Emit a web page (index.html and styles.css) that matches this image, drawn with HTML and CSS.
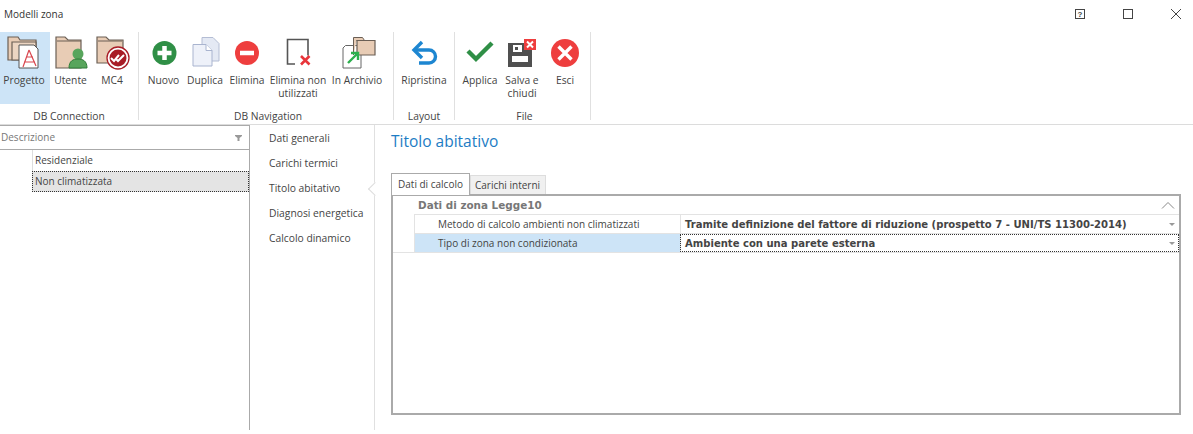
FILE: index.html
```html
<!DOCTYPE html>
<html lang="it">
<head>
<meta charset="utf-8">
<title>Modelli zona</title>
<link rel="stylesheet" href="styles.css">
</head>
<body>
<div class="window">
  <header class="titlebar">
    <span class="title">Modelli zona</span>
    <div class="winbtns">
      <svg class="winbtn" width="48" height="10" viewBox="0 0 48 10"><rect x="19.500" y=".5" width="9" height="9" fill="none" stroke="#444"/><text x="24" y="8" font-size="8" font-weight="700" text-anchor="middle" fill="#444" font-family="Liberation Sans">?</text></svg>
      <svg class="winbtn" width="48" height="10" viewBox="0 0 48 10"><rect x="19.500" y=".5" width="9" height="9" fill="none" stroke="#444"/></svg>
      <svg class="winbtn" width="48" height="10" viewBox="0 0 48 10"><path d="M19 0L29 10M29 0L19 10" stroke="#444" fill="none"/></svg>
    </div>
  </header>

  <div class="ribbon">
    <section class="group g1">
      <div class="btns">
        <div class="btn w50 active">
          <svg class="ico" width="40" height="40" viewBox="0 0 40 40"><path d="M4 28V5h10l2 3h16v20z" fill="#e8ccb5" stroke="#6b5f55" stroke-width="1.2"/><path d="M8 28V10h24v18z" fill="#ecd5c2" stroke="#6b5f55" stroke-width="1.2"/><path d="M15 13h15l4 4v19H15z" fill="#fff" stroke="#555"/><path d="M25 18l-6 17M25 18l7 16M20 30h11M22 25h7" stroke="#d9474f" stroke-width="1.2" fill="none"/></svg>
          <span>Progetto</span>
        </div>
        <div class="btn w41">
          <svg class="ico" width="40" height="40" viewBox="0 0 40 40"><path d="M5 36V5h9l3 3h13v28z" fill="#e8ccb5" stroke="#6b5f55" stroke-width="1.2"/><path d="M6 9h24" stroke="#6b5f55"/><circle cx="27" cy="22" r="5.500" fill="#58a55c"/><path d="M18 36c0-7 4-9 9-9s9 2 9 9z" fill="#58a55c" stroke="#2f7d38"/></svg>
          <span>Utente</span>
        </div>
        <div class="btn w42">
          <svg class="ico" width="40" height="40" viewBox="0 0 40 40"><path d="M5 31V5h9l3 3h14v23z" fill="#e8ccb5" stroke="#6b5f55" stroke-width="1.2"/><path d="M6 9h24" stroke="#6b5f55"/><circle cx="26" cy="26" r="11" fill="#fff" stroke="#a81c26" stroke-width="1.3"/><circle cx="26" cy="26" r="8.500" fill="#a81c26"/><path d="M19 26l3 3 5-6M24 27l2 2 6-6" stroke="#fff" stroke-width="2" fill="none"/></svg>
          <span>MC4</span>
        </div>
      </div>
      <div class="glabel">DB Connection</div>
    </section>

    <section class="group g2">
      <div class="btns">
        <div class="btn w41">
          <svg class="ico" width="40" height="40" viewBox="0 0 40 40"><circle cx="20.500" cy="21" r="12" fill="#2f8f46"/><path d="M20.500 14v14M13.500 21h14" stroke="#fff" stroke-width="4.500"/></svg>
          <span>Nuovo</span>
        </div>
        <div class="btn w42">
          <svg class="ico" width="40" height="40" viewBox="0 0 40 40"><path d="M17 5.500h11l6 6V29H17z" fill="#e4e9f4" stroke="#b4bdd4"/><path d="M8 12.500h13l6 6V34H8z" fill="#eef1f9" stroke="#a9b4cf"/><path d="M21 12.500v6h6" fill="#fff" stroke="#a9b4cf"/></svg>
          <span>Duplica</span>
        </div>
        <div class="btn w42">
          <svg class="ico" width="40" height="40" viewBox="0 0 40 40"><circle cx="20" cy="21" r="12" fill="#ee3e3e"/><path d="M13 21h14" stroke="#fff" stroke-width="4.500"/></svg>
          <span>Elimina</span>
        </div>
        <div class="btn w60">
          <svg class="ico" width="40" height="40" viewBox="0 0 40 40"><path d="M17 32H9.500V7.500h20.500v16" fill="none" stroke="#555" stroke-width="1.600"/><path d="M23 24l8.500 8.500M31.500 24L23 32.500" stroke="#e8353a" stroke-width="2.600"/></svg>
          <span>Elimina non utilizzati</span>
        </div>
        <div class="btn w58">
          <svg class="ico" width="40" height="40" viewBox="0 0 40 40"><path d="M8.500 13.500h15.500v22.500H6V16z" fill="#fff" stroke="#666"/><path d="M16.500 23V5.500h9l2 3h-8" fill="#e8ccb5" stroke="#6b5f55"/><path d="M20 23V8.500h18V23z" fill="#e8ccb5" stroke="#6b5f55" stroke-width="1.200"/><path d="M11 31l9-9M14 21h7v7" stroke="#2cb04e" stroke-width="2.400" fill="none"/></svg>
          <span>In Archivio</span>
        </div>
      </div>
      <div class="glabel">DB Navigation</div>
    </section>

    <section class="group g3">
      <div class="btns">
        <div class="btn w60">
          <svg class="ico" width="40" height="40" viewBox="0 0 40 40"><path d="M10 18H25a6.500 6.500 0 0 1 0 13H15" fill="none" stroke="#1d86d1" stroke-width="3.400"/><path d="M18 10l-8 8 8 8" fill="none" stroke="#1d86d1" stroke-width="3.400"/></svg>
          <span>Ripristina</span>
        </div>
      </div>
      <div class="glabel">Layout</div>
    </section>

    <section class="group g4">
      <div class="btns">
        <div class="btn w42">
          <svg class="ico" width="40" height="40" viewBox="0 0 40 40"><path d="M8 19l8 8 16-16" fill="none" stroke="#2f8f46" stroke-width="4.400"/></svg>
          <span>Applica</span>
        </div>
        <div class="btn w42">
          <svg class="ico" width="40" height="40" viewBox="0 0 40 40"><path d="M6 11h19l5 5v19H6z" fill="#505050"/><path d="M11 13h9v7h-9z" fill="#fff"/><path d="M13 15h3v3h-3z" fill="#505050"/><path d="M10 24h16v6H10z" fill="#fff"/><rect x="22" y="7" width="12" height="11" fill="#ee3e3e"/><path d="M25 9.500l6 6M31 9.500l-6 6" stroke="#fff" stroke-width="2"/></svg>
          <span>Salva e chiudi</span>
        </div>
        <div class="btn w44">
          <svg class="ico" width="40" height="40" viewBox="0 0 40 40"><circle cx="20" cy="21" r="14" fill="#ee3e3e"/><path d="M13.500 14.500l13 13M26.500 14.500l-13 13" stroke="#fff" stroke-width="3.400"/></svg>
          <span>Esci</span>
        </div>
      </div>
      <div class="glabel">File</div>
    </section>
  </div>

  <main class="body">
    <aside class="listpane">
      <div class="listhead">
        <span>Descrizione</span>
        <svg width="7" height="6" viewBox="0 0 7 6"><path d="M0 0h7v1L4.500 3v3h-2V3L0 1z" fill="#999"/></svg>
      </div>
      <div class="row"><span class="cell">Residenziale</span></div>
      <div class="row sel"><span class="cell">Non climatizzata</span></div>
    </aside>

    <nav class="nav">
      <div class="navitem">Dati generali</div>
      <div class="navitem">Carichi termici</div>
      <div class="navitem current">Titolo abitativo</div>
      <div class="navitem">Diagnosi energetica</div>
      <div class="navitem">Calcolo dinamico</div>
    </nav>

    <section class="content">
      <h1>Titolo abitativo</h1>
      <div class="tabs">
        <div class="tab on">Dati di calcolo</div>
        <div class="tab">Carichi interni</div>
      </div>
      <div class="panel">
        <div class="pgroup">
          <span>Dati di zona Legge10</span>
          <svg width="14" height="8" viewBox="0 0 14 8"><path d="M1 7.500L7 1.500l6 6" fill="none" stroke="#888"/></svg>
        </div>
        <div class="prow">
          <div class="pname">Metodo di calcolo ambienti non climatizzati</div>
          <div class="pval"><span>Tramite definizione del fattore di riduzione (prospetto 7 - UNI/TS 11300-2014)</span><i class="caret"></i></div>
        </div>
        <div class="prow current">
          <div class="pname">Tipo di zona non condizionata</div>
          <div class="pval"><span>Ambiente con una parete esterna</span><i class="caret"></i></div>
        </div>
        <div class="pfoot"></div>
      </div>
    </section>
  </main>
</div>
</body>
</html>
```
FILE: styles.css
```css
* { box-sizing: border-box; }
html, body { margin: 0; padding: 0; height: 100%; background: #fff; overflow: hidden; }
body { font: 10.300px/13px "Open Sans", "Noto Sans", sans-serif; color: #444; }
.window { width: 1193px; height: 434px; display: flex; flex-direction: column; }

.titlebar { height: 30px; display: flex; align-items: center; justify-content: space-between; padding-left: 4px; flex: none; }
.title { font-size: 10px; position: relative; top: -1px; color: #333; }
.winbtns { display: flex; align-items: center; margin-right: -7px; position: relative; top: -1px; }
.winbtn { display: block; }

.ribbon { height: 95px; flex: none; display: flex; border-bottom: 1px solid #dcdcdc; }
.group { display: flex; flex-direction: column; margin-top: 2px; height: 88px; border-right: 1px solid #e0e0e0; }
.g1 { width: 139px; }
.g2 { width: 255px; padding-left: 4px; }
.g3 { width: 61px; }
.g4 { width: 136px; padding-left: 4px; }
.btns { display: flex; height: 72px; flex: none; }
.btn { display: flex; flex-direction: column; align-items: center; text-align: center; height: 72px; flex: none; }
.btn span { display: block; line-height: 13px; margin-top: 2px; }
.ico { display: block; flex: none; }
.w41 { width: 41px; } .w42 { width: 42px; } .w44 { width: 44px; } .w50 { width: 50px; } .w58 { width: 58px; } .w60 { width: 60px; }
.active { background: #cde4f7; padding-right: 2px; }
.glabel { text-align: center; line-height: 14px; padding-top: 5px; }

.body { flex: 1; display: flex; min-height: 0; padding-bottom: 4px; }
.listpane { width: 250px; flex: none; border-right: 1px solid #aaa; border-top: 1px solid #aaa; font-size: 10px; }
.listhead { height: 24px; border-bottom: 1px solid #aaa; display: flex; align-items: center; justify-content: space-between; padding: 0 7px 0 1px; color: #777; }
.row { height: 21px; padding-left: 32px; }
.cell { display: flex; align-items: center; height: 100%; padding-left: 2px; border-left: 1px solid #ddd; }
.sel .cell { background: #e4e4e4; outline: 1px dotted #333; outline-offset: -1px; }

.nav { width: 125px; flex: none; border-right: 1px solid #e0e0e0; padding-top: 1px; }
.navitem { height: 25px; display: flex; align-items: center; padding-left: 19px; position: relative; }
.current.navitem::after { content: ""; position: absolute; right: -1px; top: 8px; width: 9px; height: 9px; background: #fff; border-left: 1px solid #ddd; border-top: 1px solid #ddd; transform: translateX(5px) rotate(-45deg); }

.content { flex: 1; padding: 0 12px 0 16px; min-width: 0; }
h1 { font-size: 15.500px; font-weight: 400; line-height: 20px; color: #1d7cc4; margin: 6px 0 0; }
.tabs { display: flex; align-items: flex-end; margin-top: 21px; height: 22px; font-size: 10px; }
.tab { height: 19px; padding: 0 5px 0 4px; display: flex; align-items: center; background: #f0f0f0; border: 1px solid #ddd; border-bottom: 0; }
.tab.on { height: 22px; background: #fff; border: 1px solid #aaa; border-bottom: 0; position: relative; top: 1px; z-index: 1; padding: 0 6px; }
.panel { height: 221px; border: 2px solid #aaa; font-size: 10px; }
.pgroup { height: 18px; display: flex; align-items: center; justify-content: space-between; padding: 0 4px 0 25px; font: 700 10.400px "DejaVu Sans", sans-serif; color: #777; }
.prow { display: flex; height: 19px; margin-left: 21px; border-top: 1px solid #e3e3e3; }
.pname { width: 266px; flex: none; padding-left: 23px; display: flex; align-items: center; border-left: 1px solid #e3e3e3; }
.pval { flex: 1; display: flex; align-items: center; justify-content: space-between; border-left: 1px solid #e3e3e3; padding: 0 4px; font: 700 10.050px "DejaVu Sans", sans-serif; color: #444; }
.current .pname { background: #cde4f7; }
.current .pval { outline: 1px dotted #333; outline-offset: -1px; }
.pfoot { border-top: 1px solid #e3e3e3; }
.caret { width: 0; height: 0; border: 3px solid transparent; border-top: 3px solid #999; border-bottom: 0; }
```
